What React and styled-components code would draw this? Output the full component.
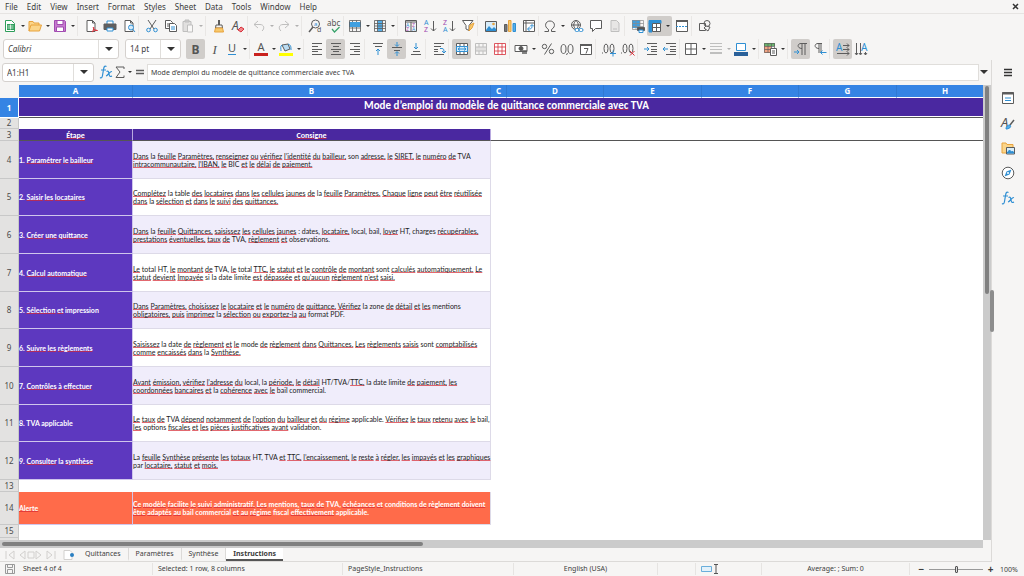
import React from 'react'
import styled, { createGlobalStyle, css } from 'styled-components'

const GlobalStyle = createGlobalStyle`
  * {
    box-sizing: border-box;
  }

  body {
    margin: 0;
    background: #f6f5f4;
    color: #3d3d3d;
    font-family: 'Noto Sans', sans-serif;
    font-size: 7px;
    overflow: hidden;
  }

  button, input, select {
    font: inherit;
    color: inherit;
    border: 0;
    margin: 0;
    padding: 0;
    background: none;
  }
`

const Window = styled.div`
  display: flex;
  flex-direction: column;
  height: 100vh;
`

const MenuBar = styled.nav`
  display: flex;
  align-items: center;
  height: 14px;
  padding: 0 5px;
  gap: 9px;
  border-bottom: 1px solid #e6e4e2;
`

const MenuItem = styled.button`
  font-size: 8px;
  line-height: 13px;
`

const CloseButton = styled.button`
  display: flex;
  margin-left: auto;
`

const Toolbar = styled.div`
  display: flex;
  align-items: center;
  height: 23px;
  padding-left: 2px;
`

const Group = styled.div`
  display: flex;

  & + & {
    padding-left: 3px;
    border-left: 1px solid #e9e7e5;
  }
`

const Tool = styled.button`
  display: flex;
  align-items: center;
  justify-content: center;
  height: 20px;
  width: ${props => (props.$menu ? 25 : 19)}px;
  border-radius: 2px;
  background: ${props => (props.$active ? '#d0cdca' : 'transparent')};
  opacity: ${props => (props.$faded ? 0.35 : 1)};
`

const ToolIcon = styled.svg`
  width: 14px;
  height: 14px;
  flex: none;
  overflow: visible;
  fill: none;
  stroke: #5c5c5c;
  stroke-width: 1;
  font-family: 'Noto Sans', sans-serif;

  text {
    stroke: none;
    fill: #555;
  }
`

const Caret = styled.span`
  flex: none;
  border: ${props => (props.$big ? 4 : 2)}px solid transparent;
  border-top-color: #333;
  border-bottom: 0;
  margin: 0 1px;

  ${Tool} & {
    margin: 0 1px 0 4px;
  }
`

const Combo = styled.label`
  display: flex;
  align-items: center;
  height: ${props => props.$height || 20}px;
  width: ${props => props.$width}px;
  margin: 0 5px 0 1px;
  border: 1px solid #d5d1ce;
  border-radius: 3px;
  background: #fff;
`

const comboText = css`
  flex: 1;
  min-width: 0;
  height: 100%;
  padding-left: 4px;
  font-size: 8px;
  outline: 0;
`

const ComboSelect = styled.select`
  ${comboText}
  appearance: none;
  font-style: ${props => (props.$italic ? 'italic' : 'normal')};
`

const ComboInput = styled.input`
  ${comboText}
`

const ComboArrow = styled.span`
  display: flex;
  align-items: center;
  justify-content: center;
  width: 20px;
  height: 100%;
  border-left: 1px solid #e0dedb;
  pointer-events: none;
`

const Body = styled.div`
  display: flex;
  flex: 1;
  min-height: 0;
`

const Main = styled.main`
  display: flex;
  flex-direction: column;
  flex: 1;
  min-width: 0;
`

const FormulaBar = styled.div`
  display: flex;
  align-items: center;
  height: 25px;
  padding: 0 2px 1px 1px;
`

const FormulaTool = styled.button`
  display: flex;
  align-items: center;
  height: 16px;
`

const FormulaInput = styled.input`
  flex: 1;
  min-width: 0;
  height: 17px;
  padding: 0 3px;
  border: 1px solid #e0dedb;
  background: #fff;
`

const SheetArea = styled.div`
  display: flex;
  flex: 1;
  min-height: 0;
`

const Grid = styled.div`
  flex: 1;
  min-width: 0;
  overflow: hidden;
  background: #fff;
`

const VScroll = styled.div`
  width: 8px;
  padding: 1px 2px;
  background: #cbcbcb;
`

const VThumb = styled.div`
  height: 46%;
  border-radius: 3px;
  background: #808080;
`

const HScroll = styled.div`
  height: 8px;
  margin-right: 8px;
  padding: 2px;
  background: #cbcbcb;
`

const HThumb = styled.div`
  width: 43%;
  height: 4px;
  border-radius: 3px;
  background: #808080;
`

const Table = styled.table`
  width: 994px;
  table-layout: fixed;
  border-collapse: separate;
  border-spacing: 0;
  font-family: Lato, sans-serif;
`

const ColHead = styled.th`
  height: 13px;
  padding: 0;
  background: #3584e4;
  border-bottom: 1px solid #fff;
  border-right: 1px solid #3079d2;
  color: #fff;
  font: bold 8px/12px 'Noto Sans', sans-serif;
`

const Corner = styled.th`
  padding: 0;
  background: #f6f5f4;
`

const RowHead = styled.th`
  padding: 0;
  border-right: 1px solid #c8c8c8;
  border-bottom: 1px solid #c8c8c8;
  background: #e3e2e1;
  color: #4a4a4a;
  font: normal 8px/10px 'Noto Sans', sans-serif;

  ${props => props.$selected && css`
    background: #3584e4;
    border-color: #fff;
    color: #fff;
    font-weight: bold;
  `}
`

const Row = styled.tr`
  height: ${props => props.$height}px;
`

const Cell = styled.td`
  padding: 0;
  ${props => props.$line && 'border-bottom: 1px solid #555;'}
`

const TitleCell = styled(Cell)`
  padding-bottom: 3px;
  background: #4a28a0;
  box-shadow: inset 0 -1px #fff;
  color: #fff;
  text-align: center;
  font-family: Carlito, Lato, sans-serif;
  font-size: 11px;
  font-weight: bold;
  line-height: 12px;
`

const HeadingCell = styled(Cell)`
  background: #4a28a0;
  border-right: 1px solid #b8a9e0;
  color: #fff;
  text-align: center;
  font-family: Carlito, Lato, sans-serif;
  font-size: 8px;
  font-weight: bold;
  line-height: 8px;
`

const StepCell = styled(Cell)`
  background: ${props => (props.$alert ? '#ff6b4a' : '#5d38bf')};
  border-right: 1px solid #cfc6ec;
  border-bottom: 1px solid #cfc6ec;
  color: #fff;
  font-size: 7px;
  font-weight: bold;
  line-height: 8px;
`

const TextCell = styled(Cell)`
  background: ${props => (props.$striped ? '#f0edfb' : '#fff')};
  border-right: 1px solid #dddae8;
  border-bottom: 1px solid #dddae8;
  color: #222;
  font-size: 7px;
  line-height: 8px;
  white-space: pre;

  ${props => props.$alert && css`
    background: #ff6b4a;
    color: #fff;
    font-weight: bold;
  `}
`

const Misspelled = styled.span`
  text-decoration: underline 1px rgba(214, 40, 50, 0.7);
  text-decoration-skip-ink: none;
  text-underline-offset: 0;
`

const Tabs = styled.div`
  display: flex;
  align-items: center;
  height: 14px;
  padding-left: 4px;
  border-bottom: 1px solid #dcdad8;
`

const Tab = styled.button`
  height: 13px;
  padding: 0 7px;
  font-size: 7px;
  line-height: 11px;
  border-bottom: 2px solid transparent;
  border-right: 1px solid #dcdad8;

  ${props => props.$active && css`
    background: #fff;
    border-bottom-color: #555;
    border-right: 0;
    font-weight: bold;
  `}
`

const TabIcons = styled.svg`
  width: 74px;
  height: 12px;
  fill: none;
  stroke: #d2d0ce;
`

const Sidebar = styled.aside`
  position: relative;
  display: flex;
  flex-direction: column;
  align-items: center;
  gap: 5px;
  width: 33px;
  padding: 3px 1px 0 0;
  border-left: 1px solid #dcdad8;
`

const Handle = styled.div`
  position: absolute;
  top: 230px;
  left: -2px;
  width: 4px;
  height: 42px;
  border-radius: 2px;
  background: #8d8d8d;
`

const StatusBar = styled.footer`
  display: grid;
  grid-template-columns: 153px 190px 171px 144px 38px 66px 148px 1fr;
  align-items: center;
  height: 14px;
`

const Status = styled.span`
  display: flex;
  align-items: center;
  justify-content: ${props => (props.$center ? 'center' : 'flex-start')};
  gap: 8px;
  height: 12px;
  padding: 0 5px;
  line-height: 12px;
  border-right: 1px solid #e6e4e2;
`

const Zoom = styled.div`
  display: flex;
  align-items: center;
  gap: 4px;
  padding-left: 8px;
`

const ZoomButton = styled.button`
  width: 7px;
  font-size: 10px;
  font-weight: bold;
  line-height: 12px;
`

const Slider = styled.input`
  width: 54px;
  height: 10px;
  appearance: none;
  background: linear-gradient(#999, #999) center / 100% 1px no-repeat;

  &::-webkit-slider-thumb {
    appearance: none;
    width: 3px;
    height: 7px;
    border: 1px solid #555;
    border-radius: 1px;
    background: #ddd;
  }
`

const ZoomValue = styled.span`
  margin-left: 2px;
`

const BLUE = '#2f8fd3'
const RED = '#d6303a'
const ORANGE = '#e8a33d'

const page = <path d="M3 1.500h5.500l2.500 2.500v8.500h-8z M8.500 1.500v2.500h2.500" fill="#fff" />
const gridLines = <path d="M1.500 2.500h11v9h-11z M1.500 5.500h11 M1.500 8.500h11 M4.500 2.500v9 M7.500 2.500v9 M10.500 2.500v9" strokeWidth=".8" />

const lines = (rows, color) => (
  <path d={rows.map(([x, y, w]) => `M${x} ${y}h${w}`).join('')} stroke={color} />
)

const icons = {
  new: <>
    <path d="M2.500 1.500h6l3 3v8h-9z" fill="#fff" stroke="#2e9e5b" />
    <path d="M4 5h7v6h-7z" fill="#2e9e5b" stroke="none" />
    <path d="M4.500 7h6M4.500 9h6M7.500 5.500v5" stroke="#fff" strokeWidth=".7" />
  </>,
  open: <path d="M1 12v-9.500h4l1 1.500h5v2M1 12l2-6h10.500l-2 6z" fill="#fbd58a" stroke={ORANGE} />,
  save: <>
    <path d="M1.500 1.500h10l1 1v10h-11z" fill="#c77ccf" stroke="#a14bb0" />
    <path d="M4 1.500h6v4h-6z M3.500 8h7v4.500h-7z" fill="#fff" stroke="#a14bb0" />
  </>,
  pdf: <>{page}<path d="M8 13c2-2 2-5 1.500-5s0 4 4 3.500c-2-1-4 0-5.500 1.500z" stroke={RED} /></>,
  print: <>
    <path d="M4 5v-3h6v3" fill="#fff" stroke={BLUE} />
    <path d="M1 5h12v5.500h-12z" fill="#606060" />
    <path d="M4 9h6v3h-6z" fill="#fff" stroke={BLUE} />
  </>,
  preview: <>{page}<circle cx="9" cy="8.500" r="2.500" fill="#d6ebf9" stroke={BLUE} /><path d="M11 10.500l2 2.500" stroke={BLUE} /></>,
  cut: <><path d="M3 1l6 9M11 1l-6 9" /><circle cx="3.500" cy="11" r="1.800" stroke={BLUE} /><circle cx="10.500" cy="11" r="1.800" stroke={BLUE} /></>,
  copy: <><path d="M1.500 1.500h5l2 2v6h-7z M3 5h3M3 7h3" fill="#fff" /><path d="M5.500 4.500h5l2 2v6h-7z" fill="#fff" /><path d="M7 8h4M7 10h4" stroke={BLUE} /></>,
  paste: <><path d="M2 2.500h8v10h-8z" fill="#bbb" /><path d="M4 1h4v2h-4z" fill="#888" /><path d="M6.500 6h5v7h-5z" fill="#fff" /></>,
  brush: <><path d="M7 1v5" strokeWidth="2" /><path d="M4 6h6l.500 3h-7z" /><path d="M3.500 9h7l1 4h-9z" fill="#f7c96d" stroke={ORANGE} /></>,
  clear: <><text x="1" y="11" fontSize="12" fontStyle="italic">A</text><path d="M7 11l3-3 3 2-3 3z" fill="#f2868b" stroke={RED} /></>,
  undo: <path d="M6 2l-4 3.500 4 3.500M2 5.500h6c4 0 5 4 2 6.500" />,
  redo: <path d="M8 2l4 3.500-4 3.500M12 5.500h-6c-4 0-5 4-2 6.500" />,
  find: <><circle cx="7.500" cy="5" r="4" /><path d="M5 8l-4 5" strokeWidth="1.500" /><text x="6" y="7" fontSize="6" style={{ fill: BLUE }}>a</text><text x="9" y="13" fontSize="7">d</text></>,
  spell: <><text x="0" y="7" fontSize="8">abc</text><path d="M5 10l2.500 3 5-5" stroke="#36a269" strokeWidth="1.200" /></>,
  row: <><path d="M1 3h12v5h-12z" fill="#3f9fe0" stroke="none" /><path d="M1.500 1.500h11v11h-11z M1.500 9h11M4.500 8v4.500M8.500 8v4.500M4.500 1.500v1.500M8.500 1.500v1.500" strokeWidth=".8" /></>,
  column: <><path d="M4.500 1h5v12h-5z" fill="#56aee8" stroke="none" /><path d="M1.500 1.500h11v11h-11z M1.500 4.500h11M1.500 7h11M1.500 9.500h11M4.500 1.500v11M9.500 1.500v11" strokeWidth=".8" /></>,
  sort: <><path d="M1.500 1.500h11v11h-11z M1.500 3h11 M7 3v9" /><text x="2" y="8" fontSize="5" style={{ fill: BLUE }}>A</text><text x="8" y="8" fontSize="5" style={{ fill: '#a14bb0' }}>Z</text><text x="2" y="12" fontSize="5" style={{ fill: '#a14bb0' }}>Z</text><text x="8" y="12" fontSize="5" style={{ fill: BLUE }}>A</text></>,
  az: <><text x="1" y="6" fontSize="7" style={{ fill: BLUE }}>A</text><text x="1" y="13" fontSize="7" style={{ fill: '#a14bb0' }}>Z</text><path d="M10.500 2v10M8 9.500l2.500 2.500 2.500-2.500" /></>,
  za: <><text x="1" y="6" fontSize="7" style={{ fill: '#a14bb0' }}>Z</text><text x="1" y="13" fontSize="7" style={{ fill: BLUE }}>A</text><path d="M10.500 2v10M8 9.500l2.500 2.500 2.500-2.500" /></>,
  filter: <><path d="M1.500 1.500h10.500l-4 5v5l-3-1.500v-3.500z" fill="#fff" /><path d="M8 12l1-6 4-2-2 5z" fill="#f7c96d" stroke={ORANGE} /></>,
  image: <><path d="M1.500 2.500h11v10h-11z" fill="#d8edfa" /><path d="M2 11l3-4 3 3 2-2 2 2v2h-10z" fill={BLUE} stroke="none" /><circle cx="9.500" cy="5" r="1.300" fill={ORANGE} stroke="none" /></>,
  chart: <><path d="M1.500 5.500h2.500v7h-2.500z" fill="#777" /><path d="M5.500 1.500h2.500v11h-2.500z" fill="#f7c96d" stroke={ORANGE} /><path d="M10 4.500h2.500v8h-2.500z" fill="#56aee8" stroke={BLUE} /></>,
  pivot: <><path d="M1.500 1.500h11v11h-11z M1.500 4h11M4 1.500v11" fill="#fff" /><path d="M6 10c4 0 4-1 4-4M8 7.500l2-2 2 2M7.500 8l-2 2 2 2" stroke={BLUE} /></>,
  omega: <path d="M1.500 12.500h4v-2c-5-3-3-8.500 1.500-8.500s6.500 5.500 1.500 8.500v2h4" />,
  link: <><circle cx="6" cy="6" r="4.500" /><path d="M1.500 6h9M6 1.500c-3 3-3 6 0 9M6 1.500c3 3 3 6 0 9" /><rect x="5" y="9.500" width="4" height="3" rx="1.500" fill="#fff" stroke={BLUE} /><rect x="9" y="9.500" width="4" height="3" rx="1.500" fill="#fff" stroke={BLUE} /></>,
  comment: <path d="M1.500 1.500h11v8h-6l-3 3v-3h-2z" fill="#fff" />,
  footer: <><path d="M3 1.500h5.500l2.500 2.500v8.500h-8z" fill="#ccc" /><path d="M5 10h4" /></>,
  printArea: <><path d="M1 1h8v8h-8z" fill="#3f9fe0" stroke="none" /><path d="M1.500 1.500h11v9h-11z M1.500 4.500h11M1.500 7.500h11M5 1.500v9M9 1.500v9" strokeWidth=".7" stroke="#8a8a8a" /><path d="M6.500 8.500h7v3h-7z" fill="#555" /><path d="M8 11h4v2.500h-4z" fill="#fff" stroke={BLUE} /></>,
  freeze: <><path d="M1 1.500h12v3h-12z M1 4h3v9h-3z" fill={BLUE} stroke={BLUE} /><path d="M4.500 4.500h8v8h-8z" fill="#fff" /><path d="M8.500 4.500v8M4.500 8.500h8" /></>,
  split: <><path d="M1.500 1.500h11v11h-11z" fill="#fff" /><path d="M1 2h12" strokeWidth="2" /><path d="M1 7.500h12" stroke={BLUE} strokeDasharray="2 1" /></>,
  shapes: <><path d="M1.500 4.500h6v7h-6z" /><circle cx="9" cy="4.500" r="3" /><path d="M8 7l4 1-2 4-4-3z" fill="#f6f5f4" /></>,
  bold: <text x="2.500" y="11.500" fontSize="12" fontWeight="bold">B</text>,
  italic: <text x="4.500" y="11.500" fontSize="13" fontStyle="italic" fontFamily="Liberation Serif">I</text>,
  underline: <><text x="3" y="10" fontSize="11">U</text>{lines([[3, 12.500, 8]], BLUE)}</>,
  fontColor: <><text x="3.500" y="9" fontSize="11">A</text><path d="M0 11h14v3h-14z" fill="#c9211e" stroke="none" /></>,
  fill: <><path d="M3 3l6-1 2 5-5 2z" fill="#b9dcf3" /><path d="M3 3c-2 1-1 4-1 6M9 2c3 1 3 3 3 6" stroke={BLUE} /><path d="M0 11h14v3h-14z" fill="#ffff00" stroke="none" /></>,
  left: lines([[2, 1.500, 10], [2, 4.500, 6], [2, 7.500, 10], [2, 9.500, 6], [2, 12.500, 10]]),
  center: lines([[2, 1.500, 10], [4, 4.500, 6], [2, 7.500, 10], [4, 9.500, 6], [2, 12.500, 10]]),
  right: lines([[2, 1.500, 10], [6, 4.500, 6], [2, 7.500, 10], [6, 9.500, 6], [2, 12.500, 10]]),
  top: <>{lines([[2, 1.500, 10], [4, 4.500, 7]])}<path d="M7 13v-6M5 9l2-2 2 2" stroke={BLUE} /></>,
  middle: <>{lines([[2, 5.500, 10], [4, 8.500, 6]])}<path d="M7 0v4M5 2.500l2 2 2-2M7 14v-4M5 11.500l2-2 2 2" stroke={BLUE} /></>,
  bottom: <>{lines([[4, 9.500, 7], [2, 12.500, 10]])}<path d="M7 1v6M5 5l2 2 2-2" stroke={BLUE} /></>,
  wrap: <>{lines([[2, 1.500, 10], [2, 4.500, 7], [2, 7.500, 4], [2, 9.500, 4], [2, 12.500, 10]])}<path d="M8 6.500h2c2 0 2 2 2 4M10 9l2 2 2-2" stroke={BLUE} /></>,
  merge: <><path d="M1.500 1.500h11v11h-11z M5 1.500v3M9 1.500v3M5 9.500v3M9 9.500v3" fill="#fff" /><path d="M1.500 4.500h11v5h-11z" fill="#d8edfa" stroke={BLUE} /><path d="M3 7h8M5 5.500l-2 1.500 2 1.500M9 5.500l2 1.500-2 1.500" stroke={BLUE} /></>,
  mergeOff: <><path d="M2 5h10v4h-10z" fill="#bbb" stroke="none" /><path d="M1.500 1.500h11v11h-11z M1.500 5h11M1.500 9h11M5 9v3.500M9 9v3.500M5 1.500v3.500M9 1.500v3.500" /></>,
  unmerge: <g stroke={RED} strokeWidth=".8"><path d="M1.500 1.500h11v11h-11z M1.500 5h11M1.500 9h11M5 1.500v11M9 1.500v11" fill="#fff" /></g>,
  currency: <><path d="M1 3.500h12v6h-12z" fill="#fff" /><circle cx="7" cy="6.500" r="2" fill="#555" /><path d="M8 9h5M8 11h5" strokeWidth="1.500" /></>,
  percent: <><circle cx="3.500" cy="4.500" r="2.200" /><circle cx="10.500" cy="9.500" r="2.200" /><path d="M10.500 1.500l-7 11" /></>,
  number: <><ellipse cx="3.500" cy="7" rx="2.500" ry="4.500" /><ellipse cx="10.500" cy="7" rx="2.500" ry="4.500" /><path d="M7.500 11l-1 2" /></>,
  date: <><path d="M1.500 2.500h11v10h-11z" fill="#fff" /><path d="M1 3h12" strokeWidth="2" /><path d="M5 6.500h4l-2 5" /></>,
  addDecimal: <><path d="M0 11h1" /><ellipse cx="4" cy="6.500" rx="2" ry="4.500" /><ellipse cx="10" cy="6.500" rx="2" ry="4.500" /><path d="M8 11.500h6M11 8.500v6" stroke={BLUE} /></>,
  delDecimal: <><path d="M0 11h1" /><ellipse cx="4" cy="6.500" rx="2" ry="4.500" /><ellipse cx="10" cy="6.500" rx="2" ry="4.500" /><path d="M9 9l4.500 4.500M13.500 9l-4.500 4.500" stroke={RED} /></>,
  indent: <>{lines([[3, 1.500, 10], [7, 4.500, 6], [7, 7.500, 6], [7, 9.500, 6], [3, 12.500, 10]])}<path d="M0 7h5M3 5l2 2-2 2" stroke={BLUE} /></>,
  outdent: <>{lines([[3, 1.500, 10], [7, 4.500, 6], [7, 7.500, 6], [7, 9.500, 6], [3, 12.500, 10]])}<path d="M0 7h5M2 5l-2 2 2 2" stroke={BLUE} /></>,
  borders: <path d="M1.500 1.500h11v11h-11z M7 1.500v11 M1.500 7h11" fill="#fff" />,
  lineStyle: lines([[1, 1.500, 12], [1, 4.500, 12], [1, 7.500, 12], [1, 10.500, 12], [1, 11.500, 12]]),
  borderColor: <><path d="M2.500 1.500h9v7h-9z" fill="#fff" stroke={BLUE} /><path d="M0 10h14v4h-14z" fill="#2a6099" stroke="none" /></>,
  conditional: <><path d="M1 1h11v3h-11z" fill="#68b36b" stroke="none" /><path d="M1 4h7v7h-7z" fill="#f3a483" stroke="none" /><path d="M1.500 1.500h10v9h-10z M1.500 4.500h10M1.500 7.500h10M5 1.500v9M8.500 1.500v9" strokeWidth=".7" /><path d="M7.500 6.500h6v7h-6z M9 9h3M9 11h3" fill="#fff" /></>,
  ltr: <><path d="M8 13v-11M11 13v-11M13 1.500h-6c-4 0-4 5 1 5" /><path d="M0 10h5M3 8l2 2-2 2" stroke={BLUE} /></>,
  rtl: <><path d="M6 11v-9M8 11v-9M9 1.500h-4c-4 0-4 5 1 5" /><path d="M7.500 10.500h6M9.500 8.500l-2 2 2 2" stroke={BLUE} /></>,
  horizontalText: <><text x="0" y="9" fontSize="10" style={{ fill: BLUE }}>A</text><path d="M7 3.500h6M7 7.500h6M1 11.500h12M11 1.500l2 2-2 2M11 5.500l2 2-2 2M11 9.500l2 2-2 2" /></>,
  verticalText: <><text x="6" y="9" fontSize="10" style={{ fill: BLUE }}>A</text><path d="M1.500 1v12M5.500 1v11M10.500 10v3M0 11l1.500 2 1.500-2M4 11l1.500 2 1.500-2M9 11l1.500 2 1.500-2" /></>,
  fx: <path d="M7.500 1.500c-2-1-2.500 0-3 3l-1 6c-.4 2-1 3-2.500 2M2 5h5M7.500 6.500c2-1 2 0 2.500 2.500s1 3 3 2M13 6.500c-2-.5-4 4-6 4.500" stroke={BLUE} strokeWidth="1.200" />,
  sum: <path d="M11 4v-2h-8l4 5-4 5.500h8v-2" />,
  equals: <path d="M3 5.500h8M3 8.500h8" strokeWidth="1.300" />,
  menu: <path d="M3 3.500h8M3 6.500h8M3 9.500h8" stroke="#333" strokeWidth="1.300" />,
  properties: <><path d="M1.500 1.500h11v11h-11z" fill="#fff" /><path d="M1 2.500h12" strokeWidth="2" /><path d="M4 7h6M4 9.500h6" stroke={BLUE} /></>,
  styles: <><text x="0" y="11" fontSize="13" fontStyle="italic">A</text><path d="M13 4l-4 5" strokeWidth="1.500" /><path d="M5 13c0-3 2-4 4-4 2 2-1 4-4 4z" fill="#56aee8" stroke={BLUE} /></>,
  gallery: <><path d="M1 12v-10h4l1 1.500h6v8.500z" fill="#fbd58a" stroke={ORANGE} /><path d="M5.500 6.500h8v6.500h-8z" fill="#d8edfa" /><path d="M6 12l2.500-3 2 2 1-1 1.500 2z" fill={BLUE} stroke={BLUE} /></>,
  navigator: <><circle cx="7" cy="7" r="5.800" fill="#fff" /><path d="M10.500 3.500l-2 5-5 2 2-5z" fill={BLUE} stroke="none" /><circle cx="7" cy="7" r="1" fill="#fff" stroke="none" /></>,
}

// trailing ">" adds a drop-down arrow, "*" is pressed, "-" is disabled
const standardTools = [
  ['new>', 'open>', 'save>'],
  ['pdf', 'print', 'preview'],
  ['cut', 'copy', 'paste>-'],
  ['brush', 'clear'],
  ['undo>-', 'redo>-'],
  ['find', 'spell'],
  ['row>', 'column>'],
  ['sort', 'az', 'za', 'filter'],
  ['image', 'chart', 'pivot'],
  ['omega>', 'link', 'comment', 'footer-'],
  ['printArea', 'freeze>*', 'split'],
  ['shapes'],
]

const formatTools = [
  ['bold*', 'italic', 'underline>'],
  ['fontColor>', 'fill>'],
  ['left', 'center*', 'right'],
  ['top', 'middle*', 'bottom'],
  ['wrap'],
  ['merge*', 'mergeOff-', 'unmerge'],
  ['currency>', 'percent', 'number', 'date'],
  ['addDecimal', 'delDecimal'],
  ['indent', 'outdent'],
  ['borders>', 'lineStyle>-', 'borderColor>'],
  ['conditional>'],
  ['ltr*', 'rtl'],
  ['horizontalText*', 'verticalText'],
]

const menus = ['File', 'Edit', 'View', 'Insert', 'Format', 'Styles', 'Sheet', 'Data', 'Tools', 'Window', 'Help']

const columns = [
  ['A', 114], ['B', 358], ['C', 16], ['D', 97], ['E', 98], ['F', 97], ['G', 98], ['H', 97],
]

const steps = [
  [38, '1. Paramétrer le bailleur', 'Dans la feuille Paramètres, renseignez ou vérifiez l’identité du bailleur, son adresse, le SIRET, le numéro de TVA\nintracommunautaire, l’IBAN, le BIC et le délai de paiement.'],
  [37, '2. Saisir les locataires', 'Complétez la table des locataires dans les cellules jaunes de la feuille Paramètres. Chaque ligne peut être réutilisée\ndans la sélection et dans le suivi des quittances.'],
  [38, '3. Créer une quittance', 'Dans la feuille Quittances, saisissez les cellules jaunes : dates, locataire, local, bail, loyer HT, charges récupérables,\nprestations éventuelles, taux de TVA, règlement et observations.'],
  [38, '4. Calcul automatique', 'Le total HT, le montant de TVA, le total TTC, le statut et le contrôle de montant sont calculés automatiquement. Le\nstatut devient Impayée si la date limite est dépassée et qu’aucun règlement n’est saisi.'],
  [37, '5. Sélection et impression', 'Dans Paramètres, choisissez le locataire et le numéro de quittance. Vérifiez la zone de détail et les mentions\nobligatoires, puis imprimez la sélection ou exportez-la au format PDF.'],
  [38, '6. Suivre les règlements', 'Saisissez la date de règlement et le mode de règlement dans Quittances. Les règlements saisis sont comptabilisés\ncomme encaissés dans la Synthèse.'],
  [38, '7. Contrôles à effectuer', 'Avant émission, vérifiez l’adresse du local, la période, le détail HT/TVA/TTC, la date limite de paiement, les\ncoordonnées bancaires et la cohérence avec le bail commercial.'],
  [37, '8. TVA applicable', 'Le taux de TVA dépend notamment de l’option du bailleur et du régime applicable. Vérifiez le taux retenu avec le bail,\nles options fiscales et les pièces justificatives avant validation.'],
  [38, '9. Consulter la synthèse', 'La feuille Synthèse présente les totaux HT, TVA et TTC, l’encaissement, le reste à régler, les impayés et les graphiques\npar locataire, statut et mois.'],
]

const alertText = 'Ce modèle facilite le suivi administratif. Les mentions, taux de TVA, échéances et conditions de règlement doivent\nêtre adaptés au bail commercial et au régime fiscal effectivement applicable.'

const title = 'Mode d’emploi du modèle de quittance commerciale avec TVA'

const dictionary = new Set([
  'la', 'son', 'tva', 'ht', 'table', 'mode', 'date', 'dates', 'local', 'bail', 'charges', 'observations',
  'total', 'format', 'pdf', 'zone', 'mentions', 'options', 'option', 'validation', 'applicable', 'commercial',
  'par', 'bic', 'si', 'suite', 'impression', 'sont', 'conditions', 'fiscal', 'limite', 'a',
])

function Spelled({ text }) {
  return text.split(/([\p{L}’-]+[.,]?)/u).map((part, i) => {
    const word = part.replace(/[.,]$/, '').toLowerCase()
    if (i % 2 === 0 || dictionary.has(word)) return part
    return <Misspelled key={i}>{part}</Misspelled>
  })
}

function Icon({ name }) {
  return <ToolIcon viewBox="0 0 14 14" aria-hidden="true">{icons[name]}</ToolIcon>
}

function ToolGroups({ groups }) {
  return groups.map((group, i) => (
    <Group key={i}>
      {group.map(item => {
        const name = item.replace(/[^a-z]/gi, '')
        const menu = item.includes('>')
        return (
          <Tool
            key={name}
            type="button"
            aria-label={name}
            $menu={menu}
            $active={item.includes('*')}
            $faded={item.includes('-')}
          >
            <Icon name={name} />
            {menu && <Caret />}
          </Tool>
        )
      })}
    </Group>
  ))
}

function Sheet() {
  return (
    <Table>
      <colgroup>
        <col style={{ width: 19 }} />
        {columns.map(([name, width]) => <col key={name} style={{ width }} />)}
      </colgroup>
      <thead>
        <tr>
          <Corner />
          {columns.map(([name]) => <ColHead key={name}>{name}</ColHead>)}
        </tr>
      </thead>
      <tbody>
        <Row $height={20}>
          <RowHead $selected>1</RowHead>
          <TitleCell colSpan={8} $line><Spelled text={title} /></TitleCell>
        </Row>
        <Row $height={11}>
          <RowHead>2</RowHead>
          <Cell colSpan={8} />
        </Row>
        <Row $height={12}>
          <RowHead>3</RowHead>
          <HeadingCell $line><Spelled text="Étape" /></HeadingCell>
          <HeadingCell $line><Spelled text="Consigne" /></HeadingCell>
          <Cell colSpan={6} $line />
        </Row>
        {steps.map(([height, step, text], i) => (
          <Row key={step} $height={height}>
            <RowHead>{i + 4}</RowHead>
            <StepCell><Spelled text={step} /></StepCell>
            <TextCell $striped={i % 2 === 0}><Spelled text={text} /></TextCell>
          </Row>
        ))}
        <Row $height={12}>
          <RowHead>13</RowHead>
        </Row>
        <Row $height={33}>
          <RowHead>14</RowHead>
          <StepCell $alert><Spelled text="Alerte" /></StepCell>
          <TextCell $alert><Spelled text={alertText} /></TextCell>
        </Row>
        <Row $height={13}>
          <RowHead>15</RowHead>
        </Row>
        <Row $height={11}>
          <RowHead />
        </Row>
      </tbody>
    </Table>
  )
}

export default function App() {
  return (
    <Window>
      <GlobalStyle />
      <MenuBar>
        {menus.map(menu => <MenuItem key={menu} type="button">{menu}</MenuItem>)}
        <CloseButton type="button" aria-label="Close">
          <svg width="7" height="7" viewBox="0 0 7 7" stroke="#333" strokeWidth="1.500"><path d="M1 1l5 5M6 1l-5 5" /></svg>
        </CloseButton>
      </MenuBar>
      <Toolbar>
        <ToolGroups groups={standardTools} />
      </Toolbar>
      <Toolbar>
        <Combo $width={116}>
          <ComboSelect $italic aria-label="Font name"><option>Calibri</option></ComboSelect>
          <ComboArrow><Caret $big /></ComboArrow>
        </Combo>
        <Combo $width={56}>
          <ComboSelect aria-label="Font size"><option>14 pt</option></ComboSelect>
          <ComboArrow><Caret $big /></ComboArrow>
        </Combo>
        <ToolGroups groups={formatTools} />
      </Toolbar>
      <Body>
        <Main>
          <FormulaBar>
            <Combo $width={92} $height={19}>
              <ComboInput aria-label="Name box" defaultValue="A1:H1" />
              <ComboArrow><Caret $big /></ComboArrow>
            </Combo>
            <FormulaTool type="button" aria-label="Function wizard"><Icon name="fx" /></FormulaTool>
            <FormulaTool type="button" aria-label="Sum"><Icon name="sum" /><Caret /></FormulaTool>
            <FormulaTool type="button" aria-label="Formula"><Icon name="equals" /></FormulaTool>
            <FormulaInput aria-label="Formula input" defaultValue={title} />
            <FormulaTool type="button" aria-label="Expand"><Caret $big /></FormulaTool>
          </FormulaBar>
          <SheetArea>
            <Grid><Sheet /></Grid>
            <VScroll><VThumb /></VScroll>
          </SheetArea>
          <HScroll><HThumb /></HScroll>
          <Tabs>
            <TabIcons viewBox="0 0 74 12" aria-hidden="true">
              <path d="M2 2v8M10 2l-5 4 5 4zM21 2l-5 4 5 4zM32 2l5 4-5 4zM43 2l5 4-5 4zM51 2v8M24 3h6v6h-6z" />
              <path d="M60 1.500h6l2 2v7h-8z" fill="#fff" />
              <circle cx="68" cy="6" r="2" fill="#2a7fc1" stroke="none" />
            </TabIcons>
            <Tab type="button">Quittances</Tab>
            <Tab type="button">Paramètres</Tab>
            <Tab type="button">Synthèse</Tab>
            <Tab type="button" $active>Instructions</Tab>
          </Tabs>
        </Main>
        <Sidebar>
          {['menu', 'properties', 'styles', 'gallery', 'navigator', 'fx'].map(name => (
            <Tool key={name} type="button" aria-label={name}><Icon name={name} /></Tool>
          ))}
          <Handle />
        </Sidebar>
      </Body>
      <StatusBar>
        <Status>
          <svg width="10" height="10" viewBox="0 0 10 10" fill="none" stroke="#999"><path d="M.500 .500h9v9h-9z M2.500 .500v3h5v-3 M2.500 9.500v-4h5v4" /></svg>
          Sheet 4 of 4
        </Status>
        <Status>Selected: 1 row, 8 columns</Status>
        <Status>PageStyle_Instructions</Status>
        <Status $center>English (USA)</Status>
        <Status />
        <Status>
          <svg width="18" height="10" viewBox="0 0 18 10" fill="none" stroke="#555"><path d="M.500 2.500h10v5h-10z" fill="#e3f1fa" stroke="#6aaedb" /><path d="M13 .500h4M15 .500v9M13 9.500h4" /></svg>
        </Status>
        <Status $center>Average: ; Sum: 0</Status>
        <Zoom>
          <ZoomButton type="button" aria-label="Zoom out">−</ZoomButton>
          <Slider type="range" aria-label="Zoom" defaultValue="50" />
          <ZoomButton type="button" aria-label="Zoom in">+</ZoomButton>
          <ZoomValue>100%</ZoomValue>
        </Zoom>
      </StatusBar>
    </Window>
  )
}
